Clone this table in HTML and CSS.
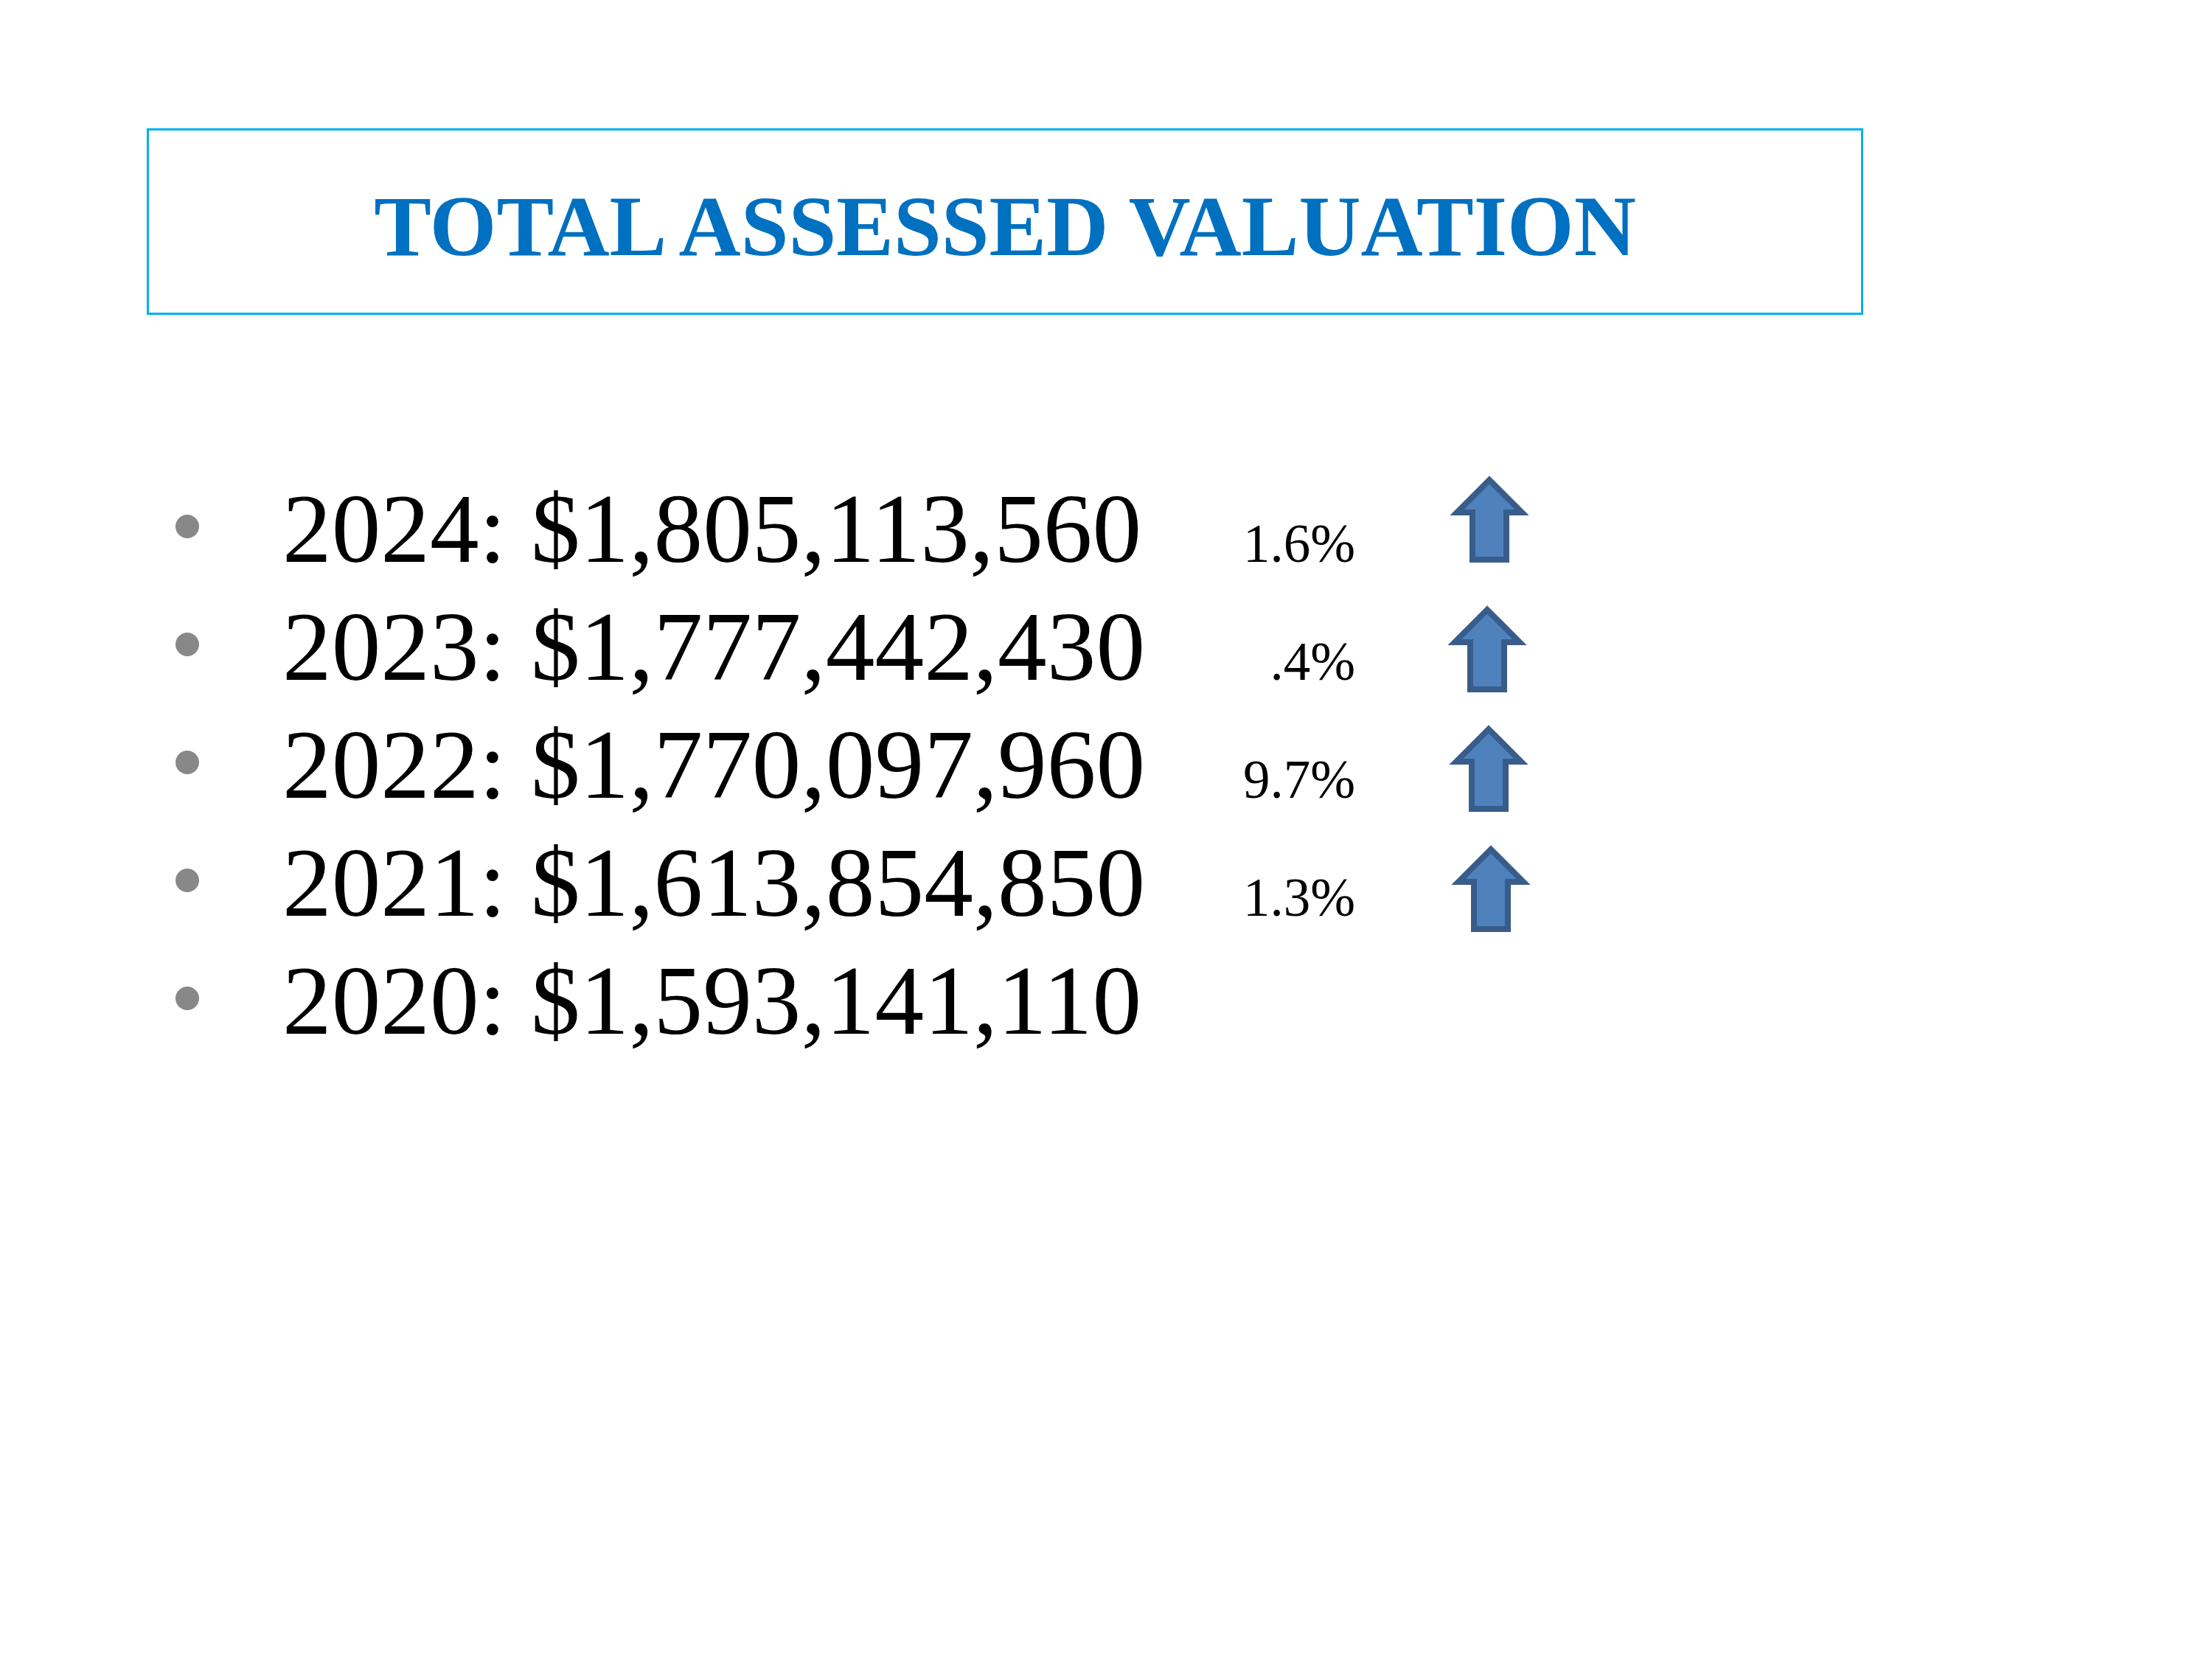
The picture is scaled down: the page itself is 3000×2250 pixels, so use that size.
FILE: index.html
```html
<!DOCTYPE html>
<html lang="en">
<head>
<meta charset="utf-8">
<title>Total Assessed Valuation</title>
<link rel="stylesheet" href="styles.css">
</head>
<body>
<main class="slide">
  <header class="title-box">
    <h1 class="title">TOTAL ASSESSED VALUATION</h1>
  </header>
  <ul class="values">
    <li class="row">
      <span class="bullet"></span>
      <span class="value">2024: $1,805,113,560</span>
      <span class="pct">1.6%</span>
      <svg class="arrow arrow-a" viewBox="0 0 108 118" width="108" height="118"><polygon points="54,6 98,50 77,50 77,114 31,114 31,50 10,50"/></svg>
    </li>
    <li class="row">
      <span class="bullet"></span>
      <span class="value">2023: $1,777,442,430</span>
      <span class="pct">.4%</span>
      <svg class="arrow arrow-b" viewBox="0 0 108 118" width="108" height="118"><polygon points="54,6 98,50 77,50 77,114 31,114 31,50 10,50"/></svg>
    </li>
    <li class="row">
      <span class="bullet"></span>
      <span class="value">2022: $1,770,097,960</span>
      <span class="pct">9.7%</span>
      <svg class="arrow arrow-c" viewBox="0 0 108 118" width="108" height="118"><polygon points="54,6 98,50 77,50 77,114 31,114 31,50 10,50"/></svg>
    </li>
    <li class="row">
      <span class="bullet"></span>
      <span class="value">2021: $1,613,854,850</span>
      <span class="pct">1.3%</span>
      <svg class="arrow arrow-d" viewBox="0 0 108 118" width="108" height="118"><polygon points="54,6 98,50 77,50 77,114 31,114 31,50 10,50"/></svg>
    </li>
    <li class="row">
      <span class="bullet"></span>
      <span class="value">2020: $1,593,141,110</span>
    </li>
  </ul>
</main>
</body>
</html>
```
FILE: styles.css
```css
html, body {
  margin: 0;
  padding: 0;
  background: #ffffff;
}

.slide {
  width: 3000px;
  height: 2250px;
  overflow: hidden;
  font-family: "Liberation Serif", "Times New Roman", serif;
  color: #000000;
  padding-top: 174px;
  box-sizing: border-box;
}

.title-box {
  margin-left: 199px;
  width: 2328px;
  height: 253px;
  box-sizing: border-box;
  border: 3px solid #00b0f0;
  padding-top: 12px;
  display: flex;
  align-items: center;
  justify-content: center;
}

.title {
  margin: 0;
  font-size: 116.5px;
  font-weight: bold;
  color: #0070c0;
  line-height: normal;
  white-space: nowrap;
}

.values {
  list-style: none;
  margin: 210px 0 0 238px;
  padding: 0;
  display: flex;
  flex-direction: column;
}

.row {
  display: flex;
  align-items: baseline;
  height: 160px;
}

.bullet {
  align-self: flex-start;
  width: 32px;
  height: 32px;
  margin-top: 61px;
  margin-right: 113px;
  border-radius: 50%;
  background: #888888;
  flex: none;
}

.value {
  flex: none;
  width: 1300px;
  font-size: 133.3px;
  line-height: 160px;
  white-space: nowrap;
}

.pct {
  flex: none;
  width: 155px;
  text-align: right;
  font-size: 73px;
  white-space: nowrap;
}

.arrow {
  align-self: flex-start;
  flex: none;
  overflow: visible;
  margin-left: 125px;
}

.arrow polygon {
  fill: #4f81bd;
  stroke: #385d8a;
  stroke-width: 8;
  stroke-linejoin: miter;
}

.arrow-a { margin-top: 8px;  margin-left: 128px; }
.arrow-b { margin-top: 24px; margin-left: 125px; }
.arrow-c { margin-top: 26px; margin-left: 127px; }
.arrow-d { margin-top: 29px; margin-left: 130px; }
```
